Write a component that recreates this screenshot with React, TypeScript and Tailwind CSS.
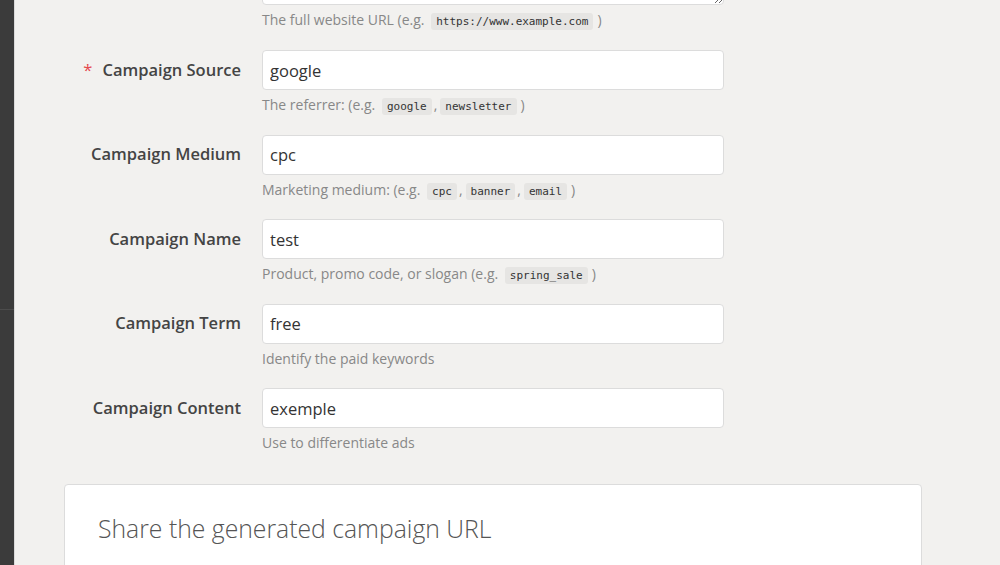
import React from "react";

/* Campaign URL builder — the lower half of the form, scrolled so the
   website URL textarea is just peeking over the top edge. */

const sans = "font-['Open_Sans',_'Liberation_Sans',_sans-serif]";

function Code({ children }: { children: React.ReactNode }) {
  return (
    <code className="ml-[3px] rounded-[3px] bg-[#e6e5e3] px-[5px] py-[2px] font-['DejaVu_Sans_Mono',_'Liberation_Mono',_monospace] text-[11px] font-medium leading-[14px] text-[#333]">
      {children}
    </code>
  );
}

// "(e.g. a , b )" with the tight comma spacing of the original
function Examples({ items }: { items: string[] }) {
  return (
    <>
      (e.g.{" "}
      {items.map((it, i) => (
        <React.Fragment key={it}>
          {i > 0 && <span className="ml-[2px]">,</span>}
          <Code>{it}</Code>
        </React.Fragment>
      ))}
      <span className="ml-[4px]">)</span>
    </>
  );
}

type Field = {
  label: string;
  value: string;
  required?: boolean;
  help: React.ReactNode;
};

const fields: Field[] = [
  {
    label: "Campaign Source",
    value: "google",
    required: true,
    help: (
      <>
        The referrer: <Examples items={["google", "newsletter"]} />
      </>
    ),
  },
  {
    label: "Campaign Medium",
    value: "cpc",
    help: (
      <>
        Marketing medium: <Examples items={["cpc", "banner", "email"]} />
      </>
    ),
  },
  {
    label: "Campaign Name",
    value: "test",
    help: (
      <>
        Product, promo code, or slogan <Examples items={["spring_sale"]} />
      </>
    ),
  },
  { label: "Campaign Term", value: "free", help: "Identify the paid keywords" },
  { label: "Campaign Content", value: "exemple", help: "Use to differentiate ads" },
];

function Row({ f }: { f: Field }) {
  return (
    <div className="mb-[20.5px] flex items-start gap-[21px]">
      <label className="flex h-10 w-[226px] flex-none items-center justify-end text-[16.5px] font-semibold text-[#444]">
        {f.required && <span className="mr-[10px] font-normal text-[#e5484d]">*</span>}
        {f.label}
      </label>
      <div className="w-[462px]">
        <input
          readOnly
          value={f.value}
          className="h-10 w-full rounded-[4px] border border-[#dcdcdc] bg-white px-[7px] text-[16.5px] text-[#333] outline-none"
        />
        <p className="mt-[5px] text-[14px] leading-[19px] text-[#888]">{f.help}</p>
      </div>
    </div>
  );
}

export default function App() {
  return (
    <div className={`flex h-[565px] w-[1000px] overflow-hidden bg-[#f2f1ef] ${sans}`}>
      {/* dark sidebar edge */}
      <div className="flex w-[15px] flex-none flex-col border-r border-[#dadada] bg-[#3b3b3b]">
        <div className="h-[310px] border-b border-[#4c4c4c]" />
      </div>

      <main className="flex-1">
        {/* website URL: only the textarea's bottom edge shows */}
        <div className="-mt-[59px] mb-[21px] flex gap-[21px]">
          <div className="w-[226px] flex-none" />
          <div className="w-[462px]">
            <textarea
              readOnly
              className="block h-[64px] w-full resize-y rounded-[4px] border border-[#dcdcdc] bg-white outline-none"
            />
            <p className="mt-[5px] text-[14px] leading-[19px] text-[#888]">
              The full website URL <Examples items={["https://www.example.com"]} />
            </p>
          </div>
        </div>

        {fields.map((f) => (
          <Row key={f.label} f={f} />
        ))}

        <section className="ml-[49px] mt-[32px] w-[858px] rounded-[4px] border border-[#dcdcdc] bg-white px-[33px] pt-[26px] pb-10">
          <h2 className="text-[24.75px] font-light leading-[36px] text-[#555]">
            Share the generated campaign URL
          </h2>
        </section>
      </main>
    </div>
  );
}
